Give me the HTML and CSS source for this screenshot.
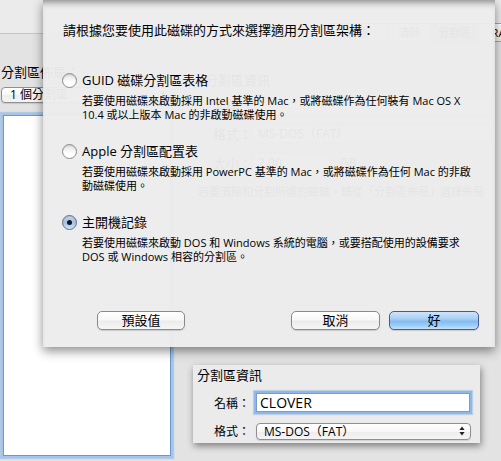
FILE: index.html
```html
<!DOCTYPE html>
<html lang="zh-Hant">
<head>
<meta charset="utf-8">
<title>分割區架構</title>
<link rel="stylesheet" href="styles.css">
</head>
<body>
<div class="window">
  <div class="topbar">
    <div class="seg">
      <span class="seg-item w62">急救</span>
      <span class="seg-item w41">清除</span>
      <span class="seg-item w47 is-on">分割區</span>
      <span class="seg-item w50">RAID</span>
    </div>
  </div>
  <div class="tabbox">
    <div class="leftcol">
      <div class="lbl">分割區佈局：</div>
      <div class="popup popup-left">
        <span>1 個分割區</span>
        <svg class="updown" width="6" height="10" viewBox="0 0 6 10"><path d="M3 0.5L5.6 4H0.4Z M3 9.5L5.6 6H0.4Z" fill="#222"/></svg>
      </div>
      <div class="list"></div>
    </div>
    <div class="rightcol">
      <div class="info-bg">
        <div class="bg-title">分割區資訊</div>
        <div class="bg-row"><span class="bg-lbl">名稱：</span><span class="bg-field wide"></span></div>
        <div class="bg-row"><span class="bg-lbl">格式：</span><span class="bg-field pop">MS-DOS（FAT）</span></div>
        <div class="bg-row"><span class="bg-lbl">大小：</span><span class="bg-field small">2.00</span><span class="bg-unit">GB</span></div>
        <p class="bg-desc">若要清除和分割所選的磁碟，請從「分割區佈局」選擇佈局</p>
      </div>
      <div class="infobox">
        <div class="info-title">分割區資訊</div>
        <div class="info-row">
          <span class="info-lbl">名稱：</span>
          <div class="textfield">CLOVER</div>
        </div>
        <div class="info-row">
          <span class="info-lbl">格式：</span>
          <div class="popup popup-fmt">
            <span>MS-DOS（FAT）</span>
            <svg class="updown" width="6" height="10" viewBox="0 0 6 10"><path d="M3 0.5L5.6 4H0.4Z M3 9.5L5.6 6H0.4Z" fill="#222"/></svg>
          </div>
        </div>
      </div>
    </div>
  </div>
</div>

<div class="sheet">
  <p class="sheet-title">請根據您要使用此磁碟的方式來選擇適用分割區架構：</p>
  <div class="options">
    <div class="opt">
      <div class="opt-head"><span class="radio"></span><span class="opt-label">GUID 磁碟分割區表格</span></div>
      <p class="opt-desc">若要使用磁碟來啟動採用 Intel 基準的 Mac，或將磁碟作為任何裝有 Mac OS X<br>10.4 或以上版本 Mac 的非啟動磁碟使用。</p>
    </div>
    <div class="opt">
      <div class="opt-head"><span class="radio"></span><span class="opt-label">Apple 分割區配置表</span></div>
      <p class="opt-desc">若要使用磁碟來啟動採用 PowerPC 基準的 Mac，或將磁碟作為任何 Mac 的非啟<br>動磁碟使用。</p>
    </div>
    <div class="opt">
      <div class="opt-head"><span class="radio is-on"></span><span class="opt-label">主開機記錄</span></div>
      <p class="opt-desc">若要使用磁碟來啟動 DOS 和 Windows 系統的電腦，或要搭配使用的設備要求<br>DOS 或 Windows 相容的分割區。</p>
    </div>
  </div>
  <div class="actions">
    <button class="btn w88">預設值</button>
    <span class="spacer"></span>
    <button class="btn w89">取消</button>
    <button class="btn w90 btn-default">好</button>
  </div>
</div>
</body>
</html>
```

FILE: styles.css
```css
html, body {
  margin: 0;
  padding: 0;
}
body {
  width: 501px;
  height: 461px;
  overflow: hidden;
  position: relative;
  background: #e3e3e3;
  color: #000;
  font-family: "Open Sans", "Noto Sans CJK TC", sans-serif;
}

/* ---------- background window ---------- */
.window {
  height: 461px;
  display: flex;
  flex-direction: column;
}
.topbar {
  flex: none;
  height: 33px;
  background: #ebebeb;
  border-bottom: 1px solid #c6c6c6;
  display: flex;
  justify-content: flex-end;
  align-items: flex-end;
}
.seg {
  display: flex;
  height: 17px;
  margin-bottom: -9px;
  margin-right: -29px;
  border: 1px solid #a5a5a5;
  border-radius: 4px;
  background: linear-gradient(#ffffff, #ebebeb);
  position: relative;
  z-index: 1;
  font-size: 11px;
  line-height: 17px;
  overflow: hidden;
}
.seg-item {
  text-align: center;
  border-left: 1px solid #b3b3b3;
}
.seg-item:first-child { border-left: 0; }
.seg-item.is-on { background: #b9b9b9; }
.w62 { width: 62px; }
.w41 { width: 41px; }
.w47 { width: 47px; }
.w50 { width: 50px; }

.tabbox {
  flex: 1;
  min-height: 0;
  display: flex;
}
.leftcol {
  flex: none;
  width: 174px;
  display: flex;
  flex-direction: column;
  padding-top: 30px;
  box-sizing: border-box;
}
.lbl {
  font-size: 13px;
  line-height: 16px;
  padding-left: 1px;
  white-space: nowrap;
}
.popup {
  box-sizing: border-box;
  display: flex;
  align-items: center;
  justify-content: space-between;
  border: 1px solid #8f8f8f;
  border-radius: 4px;
  background: linear-gradient(#ffffff 0%, #f7f7f7 50%, #ededed 51%, #f5f5f5 100%);
  box-shadow: 0 1px 1px rgba(0, 0, 0, 0.12);
  white-space: nowrap;
}
.popup-left {
  margin: 7px 1px 0 1px;
  height: 16px;
  padding: 0 6px 0 8px;
  font-size: 12px;
  line-height: 14px;
}
.updown { flex: none; }
.list {
  flex: 1;
  margin: 12px 3px 5px 3px;
  background: #ffffff;
  border: 1px solid #6f97c8;
  box-shadow: 0 0 0 2px #a3c6ec, 0 0 1px 3px rgba(120, 168, 226, 0.45);
}

.rightcol {
  flex: 1;
  display: flex;
  flex-direction: column;
  padding-left: 19px;
  min-width: 0;
}
.info-bg {
  margin-top: 38px;
  white-space: nowrap;
  overflow: hidden;
}
.bg-title {
  font-size: 13px;
  line-height: 16px;
  margin-left: 12px;
}
.bg-row {
  display: flex;
  align-items: center;
  font-size: 12px;
}
.bg-row:nth-child(2) { margin-top: 9px; }
.bg-row:nth-child(3) { margin-top: 8px; }
.bg-row:nth-child(4) { margin-top: 10px; }
.bg-lbl {
  width: 59px;
  text-align: right;
  font-size: 13px;
}
.bg-field {
  box-sizing: border-box;
  height: 19px;
  line-height: 17px;
  padding-left: 5px;
  border: 1px solid #a5a5a5;
  background: #f4f4f4;
}
.bg-field.wide { width: 240px; }
.bg-field.pop { width: 240px; border-radius: 4px; background: linear-gradient(#fff, #eee); }
.bg-field.small { width: 78px; }
.bg-unit { margin-left: 10px; }
.bg-desc {
  margin: 13px 0 0 5px;
  font-size: 11px;
  line-height: 14px;
}

.infobox {
  margin-top: auto;
  margin-bottom: 18px;
  width: 287px;
  height: 78px;
  box-sizing: border-box;
  padding: 2px 0 0 4px;
  background: #ebebeb;
  box-shadow: 1px 3px 7px rgba(0, 0, 0, 0.45);
}
.info-title {
  font-size: 13px;
  line-height: 16px;
}
.info-row {
  display: flex;
  align-items: center;
  margin-top: 10px;
}
.info-lbl {
  margin-left: 17px;
  width: 39px;
  flex: none;
  font-size: 12px;
  white-space: nowrap;
}
.textfield {
  margin-left: 3px;
  width: 214px;
  height: 19px;
  box-sizing: border-box;
  border: 1px solid #7d9cc4;
  background: #ffffff;
  box-shadow: 0 0 0 2px #8cb9ea, 0 0 1px 3px rgba(120, 168, 226, 0.4);
  font-size: 14px;
  line-height: 17px;
  padding-left: 3px;
}
.popup-fmt {
  margin-left: 3px;
  width: 215px;
  height: 17px;
  padding: 0 5px 0 7px;
  font-size: 12px;
  line-height: 15px;
}

/* ---------- sheet ---------- */
.sheet {
  position: absolute;
  z-index: 5;
  left: 43px;
  top: 0;
  width: 452px;
  height: 347px;
  box-sizing: border-box;
  padding: 22px 16px 17px 19px;
  display: flex;
  flex-direction: column;
  background: rgba(236, 236, 236, 0.965);
  box-shadow: inset 0 7px 7px -5px rgba(0, 0, 0, 0.45), 0 4px 10px rgba(0, 0, 0, 0.45);
  white-space: nowrap;
}
.sheet-title {
  margin: 0 0 0 1px;
  font-size: 13px;
  line-height: 16px;
}
.options {
  margin-top: 33px;
  display: flex;
  flex-direction: column;
  gap: 20px;
}
.opt-head {
  display: flex;
  align-items: center;
  height: 18px;
  gap: 5px;
}
.opt-label {
  font-size: 13px;
  line-height: 18px;
}
.opt-desc {
  margin: 5px 0 0 20px;
  font-size: 11px;
  line-height: 14px;
}
.radio {
  flex: none;
  width: 15px;
  height: 15px;
  box-sizing: border-box;
  border-radius: 50%;
  border: 1px solid #8c8c8c;
  background: linear-gradient(#e2e2e2, #ffffff 65%);
  box-shadow: inset 0 1px 1px rgba(0, 0, 0, 0.12);
  display: flex;
  align-items: center;
  justify-content: center;
}
.radio.is-on {
  border-color: #5b6f92;
  background: linear-gradient(#c6d9ee, #a3c0e2 50%, #d2e4f6);
}
.radio.is-on::after {
  content: "";
  width: 5px;
  height: 5px;
  border-radius: 50%;
  background: #151520;
}

.actions {
  margin-top: auto;
  display: flex;
  align-items: center;
  padding-left: 35px;
}
.spacer { flex: 1; }
.btn {
  box-sizing: border-box;
  height: 19px;
  padding: 0;
  margin: 0;
  border: 1px solid #8a8a8a;
  border-radius: 5px;
  background: linear-gradient(#ffffff 0%, #f8f8f8 45%, #ececec 55%, #f6f6f6 100%);
  box-shadow: 0 1px 1px rgba(0, 0, 0, 0.15);
  font-family: "Open Sans", "Noto Sans CJK TC", sans-serif;
  font-size: 13px;
  line-height: 17px;
  color: #000;
}
.w88 { width: 88px; }
.w89 { width: 89px; }
.w90 { width: 90px; margin-left: 9px; }
.btn-default {
  border-color: #4a5990;
  background: linear-gradient(#cfe4fa 0%, #a9cff5 40%, #84bbf1 55%, #9dcef8 80%, #c3e3fc 100%);
}
```
